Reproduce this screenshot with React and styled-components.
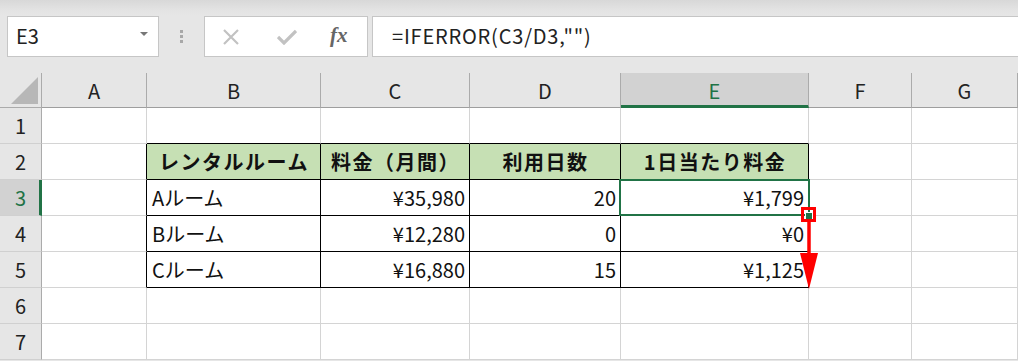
import { Fragment } from "react";
import styled, { createGlobalStyle } from "styled-components";

const GlobalStyle = createGlobalStyle`
  body {
    margin: 0;
    background: #ffffff;
    font-family: "Noto Sans CJK JP", "Noto Sans", sans-serif;
  }
`;

const COLS = [
  { name: "A", width: 105 },
  { name: "B", width: 174 },
  { name: "C", width: 149 },
  { name: "D", width: 151 },
  { name: "E", width: 188 },
  { name: "F", width: 103 },
  { name: "G", width: 106 },
];

// 表の中身（行 1〜7）
const ROWS = [
  [],
  [
    null,
    { v: "レンタルルーム", head: true },
    { v: "料金（月間）", head: true },
    { v: "利用日数", head: true },
    { v: "1日当たり料金", head: true },
  ],
  [null, { v: "Aルーム" }, { v: "¥35,980", num: true }, { v: "20", num: true }, { v: "¥1,799", num: true, sel: true }],
  [null, { v: "Bルーム" }, { v: "¥12,280", num: true }, { v: "0", num: true }, { v: "¥0", num: true }],
  [null, { v: "Cルーム" }, { v: "¥16,880", num: true }, { v: "15", num: true }, { v: "¥1,125", num: true }],
  [],
  [],
];

const Shell = styled.div`
  width: 1018px;
  height: 361px;
  overflow: hidden;
  background: #e6e6e6;
  position: relative;
`;

const TopBar = styled.div`
  height: 73px;
  box-sizing: border-box;
  padding: 16px 0 0 7px;
  display: flex;
  align-items: flex-start;
  background: linear-gradient(#d8d8d8 0, #e3e3e3 10px, #e6e6e6 16px);
`;

const NameBox = styled.div`
  width: 152px;
  height: 41px;
  box-sizing: border-box;
  border: 1px solid #c6c6c6;
  background: #ffffff;
  display: flex;
  align-items: center;
  justify-content: space-between;
  padding: 0 10px 2px 8px;
  font-size: 20px;
  color: #222;
`;

const Caret = styled.span`
  width: 0;
  height: 0;
  border-left: 4px solid transparent;
  border-right: 4px solid transparent;
  border-top: 4px solid #777;
  margin-top: -4px;
`;

const Grip = styled.div`
  width: 45px;
  height: 41px;
  display: flex;
  flex-direction: column;
  align-items: center;
  justify-content: center;
  gap: 2px;
  & span {
    width: 3px;
    height: 3px;
    background: #a8a8a8;
  }
`;

const FxBox = styled.div`
  width: 164px;
  height: 41px;
  box-sizing: border-box;
  border: 1px solid #c6c6c6;
  background: #ffffff;
  display: flex;
  align-items: center;
  padding-left: 17px;
  gap: 37px;
`;

const Fx = styled.span`
  font-family: "Liberation Serif", serif;
  font-style: italic;
  font-weight: bold;
  font-size: 21px;
  color: #666;
  margin-left: -4px;
  margin-top: -2px;
`;

const FormulaBox = styled.div`
  flex: 1;
  height: 41px;
  margin-left: 4px;
  margin-right: -4px;
  box-sizing: border-box;
  border: 1px solid #c6c6c6;
  background: #ffffff;
  display: flex;
  align-items: center;
  padding: 0 0 2px 19px;
  font-size: 20px;
  color: #222;
  letter-spacing: 0.8px;
`;

const Sheet = styled.div`
  display: grid;
  grid-template-columns: 42px ${COLS.map((c) => c.width + "px").join(" ")};
  grid-template-rows: 35px repeat(7, 36px);
  background: #ffffff;
`;

const Corner = styled.div`
  background: #e6e6e6;
  border-right: 1px solid #ababab;
  border-bottom: 1px solid #ababab;
  position: relative;
  &::after {
    content: "";
    position: absolute;
    right: 3px;
    bottom: 3px;
    width: 0;
    height: 0;
    border-left: 27px solid transparent;
    border-bottom: 27px solid #b7b7b7;
  }
`;

const ColHead = styled.div`
  background: ${(p) => (p.active ? "#d2d2d2" : "#e6e6e6")};
  color: ${(p) => (p.active ? "#217346" : "#222")};
  border-right: 1px solid #ababab;
  border-bottom: ${(p) => (p.active ? "3px solid #217346" : "1px solid #9e9e9e")};
  display: flex;
  align-items: center;
  justify-content: center;
  font-size: 20px;
  padding-top: ${(p) => (p.active ? "2px" : "0")};
  box-sizing: border-box;
`;

const RowHead = styled.div`
  background: ${(p) => (p.active ? "#d2d2d2" : "#e6e6e6")};
  color: ${(p) => (p.active ? "#217346" : "#222")};
  border-right: ${(p) => (p.active ? "3px solid #217346" : "1px solid #ababab")};
  border-bottom: 1px solid #d0d0d0;
  display: flex;
  align-items: center;
  justify-content: center;
  font-size: 20px;
  padding-left: ${(p) => (p.active ? "2px" : "0")};
  box-sizing: border-box;
`;

const Cell = styled.div`
  box-sizing: border-box;
  border-right: 1px solid ${(p) => (p.edgeR ? "#000" : "#d4d4d4")};
  border-bottom: 1px solid ${(p) => (p.edgeB ? "#000" : "#d4d4d4")};
  background: ${(p) => (p.head ? "#c6e0b4" : "#ffffff")};
  display: flex;
  align-items: center;
  justify-content: ${(p) => (p.head ? "center" : p.num ? "flex-end" : "flex-start")};
  padding: 0 4px 0 5px;
  font-size: 20px;
  font-weight: ${(p) => (p.head ? 700 : 400)};
  letter-spacing: ${(p) => (p.head ? "1.5px" : "0")};
  color: #111;
  white-space: nowrap;
  position: relative;
  ${(p) =>
    p.sel &&
    `
    z-index: 1;
    &::before {
      content: "";
      position: absolute;
      left: -2px;
      top: -1px;
      right: -2px;
      bottom: -1px;
      border: 2px solid #217346;
      pointer-events: none;
    }
    &::after {
      content: "";
      position: absolute;
      right: -5px;
      bottom: -5px;
      width: 6px;
      height: 6px;
      background: #217346;
      border: 1px solid #fff;
    }
  `}
`;

const HandleMark = styled.div`
  position: absolute;
  left: 801px;
  top: 207px;
  width: 15px;
  height: 15px;
  box-sizing: border-box;
  border: 3px solid #ff0000;
  z-index: 2;
`;

const Arrow = styled.svg`
  position: absolute;
  left: 799px;
  top: 221px;
  z-index: 2;
`;

const inTable = (r, c) => r >= 1 && r <= 4 && c >= 1 && c <= 4;

export default function App() {
  return (
    <Shell>
      <GlobalStyle />
      <TopBar>
        <NameBox>
          E3
          <Caret />
        </NameBox>
        <Grip>
          <span />
          <span />
          <span />
        </Grip>
        <FxBox>
          <svg width="18" height="18" viewBox="0 0 18 18">
            <path d="M2 2 L16 16 M16 2 L2 16" stroke="#c2c2c2" strokeWidth="2.2" fill="none" />
          </svg>
          <svg width="20" height="16" viewBox="0 0 20 16">
            <path d="M1 8 L7 14 L19 2" stroke="#c2c2c2" strokeWidth="3.2" fill="none" />
          </svg>
          <Fx>fx</Fx>
        </FxBox>
        <FormulaBox>=IFERROR(C3/D3,"")</FormulaBox>
      </TopBar>

      <Sheet>
        <Corner />
        {COLS.map((c) => (
          <ColHead key={c.name} active={c.name === "E"}>
            {c.name}
          </ColHead>
        ))}
        {ROWS.map((row, r) => (
          <Fragment key={r}>
            <RowHead active={r === 2}>{r + 1}</RowHead>
            {COLS.map((c, ci) => {
              const d = row[ci] || {};
              const edgeR = inTable(r, ci) || inTable(r, ci + 1);
              const edgeB = inTable(r, ci) || inTable(r + 1, ci);
              return (
                <Cell
                  key={c.name}
                  edgeR={edgeR}
                  edgeB={edgeB}
                  head={d.head}
                  num={d.num}
                  sel={d.sel}
                >
                  {d.v}
                </Cell>
              );
            })}
          </Fragment>
        ))}
      </Sheet>

      <HandleMark />
      <Arrow width="22" height="70" viewBox="0 0 22 70">
        <line x1="10" y1="0" x2="10" y2="40" stroke="#ff0000" strokeWidth="3.5" />
        <path d="M1 32 L19 32 L10 68 Z" fill="#ff0000" />
      </Arrow>
    </Shell>
  );
}
